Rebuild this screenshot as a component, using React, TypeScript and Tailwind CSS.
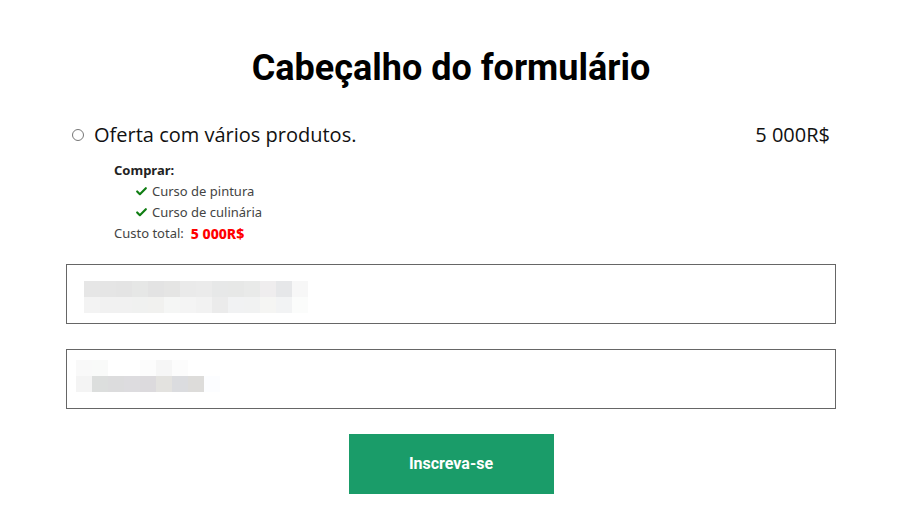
import { Check } from "lucide-react";

// blurred placeholder text, drawn as pixel blocks
const field1 = [
  ["#e6e6e6", "#e5e5e5", "#e4e4e4", "#e6e7e6", "#e3e3e3", "#e5e5e4", "#eaeaea", "#ebebeb", "#e7e8e8", "#e7e8e7", "#e9eae9", "#efedee", "#e6e7e9", "#f7f7f7"],
  ["#f3f3f3", "#f1f1f1", "#f1f1f1", "#f0f1f0", "#f1f1ef", "#f5f6f5", "#f4f4f4", "#f2f2f2", "#ebebeb", "#f1f2f3", "#f1f2f2", "#f5f5f3", "#f2f3f4", "#fbfcfb"],
];

const field2 = [
  ["#f9f9f9", "#f9faf9", "#ffffff", "#ffffff", "#fcfcfc", "#f6f6f6", "#fcfcfc", "#ffffff", "#ffffff"],
  ["#f4f4f4", "#dcdedd", "#dcdcdd", "#dddcdf", "#dcdadd", "#e3e2df", "#dbdcdf", "#dddcda", "#fcfdff"],
];

function Blur({ rows }: { rows: string[][] }) {
  return (
    <div className="flex flex-col">
      {rows.map((row, i) => (
        <div key={i} className="flex">
          {row.map((c, j) => (
            <div key={j} className="w-4 h-4" style={{ backgroundColor: c }} />
          ))}
        </div>
      ))}
    </div>
  );
}

export default function App() {
  return (
    <div className="w-[915px] h-[531px] bg-white font-['Open_Sans',sans-serif] text-black">
      <div className="w-[770px] ml-[66px] flex flex-col">
        {/* Title */}
        <h1 className="mt-[45px] text-center font-['Roboto',sans-serif] font-bold text-[36px] leading-[46px] text-black">
          Cabeçalho do formulário
        </h1>

        {/* Offer */}
        <div className="mt-[30px] flex items-center justify-between pl-[6px] pr-[6px]">
          <div className="flex items-center gap-[10px]">
            <span className="w-[12px] h-[12px] rounded-full border border-[#767676] bg-white" />
            <span className="text-[20px] leading-[28px] text-[#111]">Oferta com vários produtos.</span>
          </div>
          <span className="text-[20px] leading-[28px] text-[#111]">5 000R$</span>
        </div>

        <div className="mt-[11px] ml-[48px] flex flex-col text-[13px] leading-[21px] text-[#444] font-['Noto_Sans',sans-serif]">
          <span className="font-bold text-[#222]">Comprar:</span>
          <div className="ml-[21px] flex items-center gap-[4px]">
            <Check className="w-[13px] h-[13px] text-[#0f7d12]" strokeWidth={4} />
            <span>Curso de pintura</span>
          </div>
          <div className="ml-[21px] flex items-center gap-[4px]">
            <Check className="w-[13px] h-[13px] text-[#0f7d12]" strokeWidth={4} />
            <span>Curso de culinária</span>
          </div>
          <div className="flex items-center gap-[7px]">
            <span>Custo total:</span>
            <span className="font-extrabold text-[14px] text-[#ff0000]">5 000R$</span>
          </div>
        </div>

        {/* Inputs */}
        <div className="mt-[20px] h-[60px] border border-[#666] flex items-center pl-[17px] pt-[6px]">
          <Blur rows={field1} />
        </div>
        <div className="mt-[25px] h-[60px] border border-[#666] flex items-center pl-[9px] pb-[6px]">
          <Blur rows={field2} />
        </div>

        {/* Submit */}
        <button className="mt-[25px] self-center w-[205px] h-[60px] bg-[#1a9c69] text-white font-['Roboto',sans-serif] font-bold text-[16px]">
          Inscreva-se
        </button>
      </div>
    </div>
  );
}
